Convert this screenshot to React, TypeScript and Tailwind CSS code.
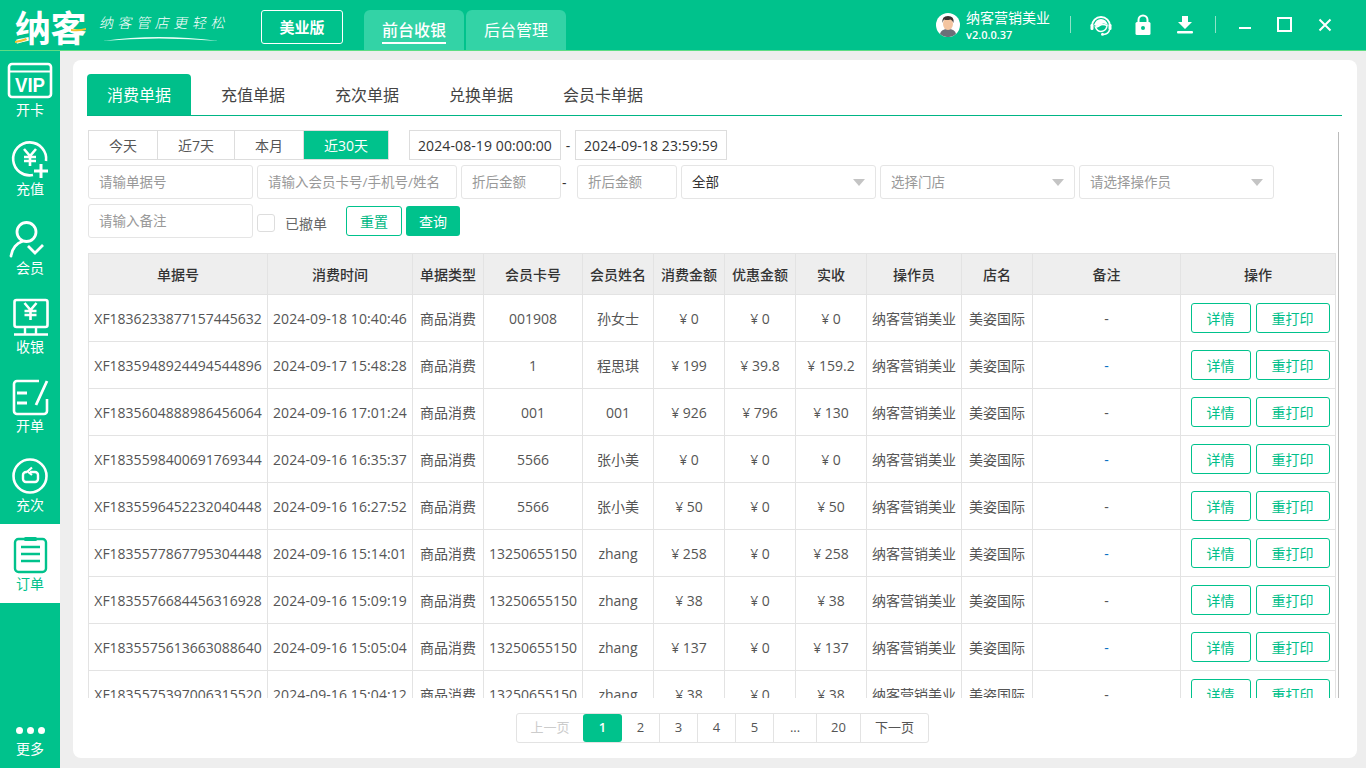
import type { ReactNode } from "react";

const font = "font-['Open_Sans','Noto_Sans_CJK_SC',sans-serif]";

const rows = [
  ["XF1836233877157445632", "2024-09-18 10:40:46", "001908", "孙女士", "¥ 0", "¥ 0", "¥ 0"],
  ["XF1835948924494544896", "2024-09-17 15:48:28", "1", "程思琪", "¥ 199", "¥ 39.8", "¥ 159.2"],
  ["XF1835604888986456064", "2024-09-16 17:01:24", "001", "001", "¥ 926", "¥ 796", "¥ 130"],
  ["XF1835598400691769344", "2024-09-16 16:35:37", "5566", "张小美", "¥ 0", "¥ 0", "¥ 0"],
  ["XF1835596452232040448", "2024-09-16 16:27:52", "5566", "张小美", "¥ 50", "¥ 0", "¥ 50"],
  ["XF1835577867795304448", "2024-09-16 15:14:01", "13250655150", "zhang", "¥ 258", "¥ 0", "¥ 258"],
  ["XF1835576684456316928", "2024-09-16 15:09:19", "13250655150", "zhang", "¥ 38", "¥ 0", "¥ 38"],
  ["XF1835575613663088640", "2024-09-16 15:05:04", "13250655150", "zhang", "¥ 137", "¥ 0", "¥ 137"],
  ["XF1835575397006315520", "2024-09-16 15:04:12", "13250655150", "zhang", "¥ 38", "¥ 0", "¥ 38"],
];

const headers = ["单据号", "消费时间", "单据类型", "会员卡号", "会员姓名", "消费金额", "优惠金额", "实收", "操作员", "店名", "备注", "操作"];

function Yen({ x, y }: { x: number; y: number }) {
  return (
    <path
      d={`M${x - 6} ${y - 8}l6 7 6-7M${x} ${y - 1}v10M${x - 6} ${y}h12M${x - 6} ${y + 4}h12`}
      fill="none"
      stroke="currentColor"
      strokeWidth="2.6"
    />
  );
}

function SideItem({ label, active, first, children }: { label: string; active?: boolean; first?: boolean; children: ReactNode }) {
  return (
    <div className={`flex flex-col items-center ${first ? "h-[78px] pt-[9px]" : "h-[79px] pt-[10px]"} ${active ? "bg-white text-[#00c28c]" : "text-white"}`}>
      <svg width="60" height="40" viewBox="0 0 60 40" className="shrink-0">
        {children}
      </svg>
      <span className="text-[14px] leading-[20px]">{label}</span>
    </div>
  );
}

function Sidebar() {
  return (
    <div className="flex w-[60px] shrink-0 flex-col bg-[#00c28c]">
      <SideItem label="开卡" first>
        <rect x="9" y="4" width="42" height="33" rx="3" fill="none" stroke="currentColor" strokeWidth="2.6" />
        <path d="M9 11.500h42" stroke="currentColor" strokeWidth="2" />
        <text x="30" y="32" textAnchor="middle" fill="currentColor" fontSize="20" fontWeight="700" textLength="30" lengthAdjust="spacingAndGlyphs" fontFamily="Liberation Sans, sans-serif">VIP</text>
      </SideItem>
      <SideItem label="充值">
        <path d="M33 36A16.5 16.5 0 1 1 46 22" fill="none" stroke="currentColor" strokeWidth="2.6" />
        <Yen x={30} y={18} />
        <path d="M41 25v14M34 32h14" stroke="currentColor" strokeWidth="3" />
      </SideItem>
      <SideItem label="会员">
        <circle cx="26.5" cy="14" r="9.5" fill="none" stroke="currentColor" strokeWidth="2.8" />
        <path d="M11 38c1-8 6-13 11-14.500" fill="none" stroke="currentColor" strokeWidth="2.8" strokeLinecap="round" />
        <path d="M28 28l7 7 8-8" fill="none" stroke="currentColor" strokeWidth="2.8" />
      </SideItem>
      <SideItem label="收银">
        <rect x="14.500" y="3" width="33" height="27" rx="2" fill="none" stroke="currentColor" strokeWidth="2.6" />
        <Yen x={30.500} y={14} />
        <path d="M25 30v7M36 30v7M14 37.500h34" stroke="currentColor" strokeWidth="2.4" fill="none" />
      </SideItem>
      <SideItem label="开单">
        <path d="M39 5H17a3 3 0 0 0-3 3v27a3 3 0 0 0 3 3h27a3 3 0 0 0 3-3V23" fill="none" stroke="currentColor" strokeWidth="2.6" />
        <path d="M17 17h10M17 27h10M47 5L36 29" fill="none" stroke="currentColor" strokeWidth="2.8" />
      </SideItem>
      <SideItem label="充次">
        <circle cx="30" cy="21" r="16.500" fill="none" stroke="currentColor" strokeWidth="2.6" />
        <path d="M27 17h-1a3 3 0 0 0-3 3v4a3 3 0 0 0 3 3h9a3 3 0 0 0 3-3v-4a3 3 0 0 0-3-3h-5" fill="none" stroke="currentColor" strokeWidth="2.4" />
        <path d="M32 12.500L27.500 16.500 32 20" fill="none" stroke="currentColor" strokeWidth="2.2" />
      </SideItem>
      <SideItem label="订单" active>
        <rect x="15" y="5" width="31" height="33" rx="3.500" fill="none" stroke="currentColor" strokeWidth="2.4" />
        <rect x="24" y="3" width="13" height="4" rx="1.500" fill="currentColor" />
        <path d="M21 13h19M21 20h19M21 27h19" stroke="currentColor" strokeWidth="2.4" />
      </SideItem>
      <div className="mt-auto flex flex-col items-center pb-[9px] text-white">
        <div className="mb-[5px] flex gap-[4px]">
          <span className="h-[7px] w-[7px] rounded-full bg-white" />
          <span className="h-[7px] w-[7px] rounded-full bg-white" />
          <span className="h-[7px] w-[7px] rounded-full bg-white" />
        </div>
        <span className="text-[14px] leading-[20px]">更多</span>
      </div>
    </div>
  );
}

function Header() {
  return (
    <div className="flex h-[51px] shrink-0 items-stretch border-b border-[#5fdd84] bg-[#00c28c] text-white">
      <div className="relative ml-[15px] mt-[9px] h-[40px] w-[74px] whitespace-nowrap text-[36px] font-bold leading-[40px] tracking-[-0.5px]">
        纳客
        <svg width="74" height="40" viewBox="0 0 74 40" className="absolute left-0 top-0">
          <path d="M0 32q6-1 11-3l1 2q-5 2-12 3zM56 20q8 1 15-1l0 2q-7 2-15 1z" fill="#f2c230" />
        </svg>
      </div>
      <div className="ml-[11px] mt-[13px] flex w-[128px] flex-col">
        <span className="-skew-x-12 whitespace-nowrap text-[14px] font-light leading-[20px] tracking-[4.6px]">纳客管店更轻松</span>
        <svg width="120" height="8" viewBox="0 0 120 8" className="ml-[2px] mt-[1px]">
          <path d="M1 7Q55-1 117 7Q55 2 1 7z" fill="#e8fff6" />
        </svg>
      </div>
      <div className="ml-[33px] mt-[10px] flex h-[34px] w-[82px] items-center justify-center rounded-[3px] border border-white text-[15px] font-bold">美业版</div>
      <div className="ml-[21px] mt-[10px] flex h-[40px] w-[100px] items-start justify-center rounded-t-[6px] bg-[#33d3a6] pt-[9px]">
        <span className="border-b-2 border-white pb-[1px] text-[16px] font-medium leading-[22px]">前台收银</span>
      </div>
      <div className="ml-[2px] mt-[10px] flex h-[40px] w-[100px] items-start justify-center rounded-t-[6px] bg-[#33d3a6] pt-[9px] text-[16px] leading-[22px]">后台管理</div>
      <div className="ml-[370px] mt-[13px] h-[24px] w-[24px] shrink-0">
        <svg width="24" height="24" viewBox="0 0 24 24">
          <circle cx="12" cy="12" r="12" fill="#fff" />
          <path d="M4 21q1-5 8-5t8 5a12 12 0 0 1-16 0z" fill="#6b6f78" />
          <ellipse cx="12" cy="11" rx="5" ry="6" fill="#f3c4a0" />
          <path d="M6.500 10q-1-7 5.500-7t5.500 7q-1-3-3-3.500-4 1-6.500 0-1 1-1.500 3.500z" fill="#3a3230" />
        </svg>
      </div>
      <div className="ml-[6px] mt-[9px] flex flex-col">
        <span className="text-[14px] leading-[18px]">纳客营销美业</span>
        <span className="text-[11px] font-semibold leading-[15px]">v2.0.0.37</span>
      </div>
      <div className="ml-[20px] mt-[16px] h-[17px] w-px bg-[#8fe3c8]" />
      <svg width="22" height="22" viewBox="0 0 22 22" className="ml-[19px] mt-[14px]">
        <path d="M2 12a9 9 0 0 1 18 0" fill="none" stroke="#fff" strokeWidth="2" />
        <rect x="0.500" y="10" width="3" height="6" rx="1.200" fill="#fff" />
        <rect x="18.500" y="10" width="3" height="6" rx="1.200" fill="#fff" />
        <path d="M4 11q2-6 7-6t7 6q-5-3-8 0-3 2-6 0z" fill="#fff" />
        <path d="M5.500 13q2 0 4-1.500 3-2 7.500 0-.5 5.500-6 6-4 0-5.500-4.500z" fill="none" stroke="#fff" strokeWidth="1.600" />
        <path d="M19.500 16q-1 4-6 4.500" fill="none" stroke="#fff" strokeWidth="1.500" />
        <circle cx="12.500" cy="20.300" r="1.500" fill="#fff" />
      </svg>
      <svg width="18" height="22" viewBox="0 0 18 22" className="ml-[22px] mt-[14px]">
        <path d="M4.500 9V6a4.500 4.500 0 0 1 9 0v3" fill="none" stroke="#fff" strokeWidth="2" />
        <rect x="1.500" y="8" width="15" height="13" rx="1.500" fill="#fff" />
        <circle cx="9" cy="14" r="2" fill="#00c28c" />
      </svg>
      <svg width="16" height="18" viewBox="0 0 16 18" className="ml-[25px] mt-[16px]">
        <path d="M5 0h6v6h4l-7 7-7-7h4z" fill="#fff" />
        <rect y="15" width="16" height="2.500" rx="1" fill="#fff" />
      </svg>
      <div className="ml-[22px] mt-[16px] h-[17px] w-px bg-[#8fe3c8]" />
      <div className="ml-[23px] mt-[27px] h-[2px] w-[12px] bg-white" />
      <div className="ml-[26px] mt-[17px] h-[15px] w-[15px] border-2 border-white" />
      <svg width="14" height="14" viewBox="0 0 14 14" className="ml-[26px] mt-[18px]">
        <path d="M1.500 1.500l11 11M12.500 1.500l-11 11" stroke="#fff" strokeWidth="2" />
      </svg>
    </div>
  );
}

function Field({ placeholder, w }: { placeholder: string; w: string }) {
  return (
    <input
      placeholder={placeholder}
      className={`${w} h-[34px] rounded-[3px] border border-[#e5e5e5] px-[10px] text-[13.5px] outline-none placeholder:text-[#999]`}
    />
  );
}

function Select({ label, dark }: { label: string; dark?: boolean }) {
  return (
    <div className={`flex h-[34px] w-[195px] items-center justify-between rounded-[3px] border border-[#e5e5e5] pl-[10px] pr-[10px] text-[13.5px] ${dark ? "text-[#333]" : "text-[#999]"}`}>
      <span>{label}</span>
      <svg width="12" height="7" viewBox="0 0 12 7">
        <path d="M0 0h12L6 7z" fill="#c4c4c4" />
      </svg>
    </div>
  );
}

function Filters() {
  const ranges = [
    ["今天", "w-[69px]"],
    ["近7天", "w-[77px]"],
    ["本月", "w-[69px]"],
  ];
  return (
    <div className="flex flex-col">
      <div className="flex items-center">
        <div className="ml-px flex h-[30px] border border-[#ddd] text-[14px] text-[#555]">
          {ranges.map(([t, w]) => (
            <div key={t} className={`${w} flex items-center justify-center border-r border-[#ddd]`}>{t}</div>
          ))}
          <div className="flex w-[84px] items-center justify-center bg-[#00c28c] text-white">近30天</div>
        </div>
        <div className="ml-[20px] flex h-[30px] w-[152px] items-center justify-center border border-[#ddd] text-[14px] tracking-[0.1px] text-[#333]">2024-08-19 00:00:00</div>
        <span className="w-[14px] text-center text-[14px] text-[#333]">-</span>
        <div className="flex h-[30px] w-[152px] items-center justify-center border border-[#ddd] text-[14px] tracking-[0.1px] text-[#333]">2024-09-18 23:59:59</div>
      </div>
      <div className="ml-px mt-[5px] flex items-center gap-[4px]">
        <Field placeholder="请输单据号" w="w-[165px]" />
        <Field placeholder="请输入会员卡号/手机号/姓名" w="w-[200px]" />
        <Field placeholder="折后金额" w="w-[100px]" />
        <span className="-mx-[4px] w-[16px] pl-[1px] text-left text-[14px] text-[#333]">-</span>
        <Field placeholder="折后金额" w="w-[100px]" />
        <Select label="全部" dark />
        <Select label="选择门店" />
        <Select label="请选择操作员" />
      </div>
      <div className="ml-px mt-[5px] flex items-center">
        <Field placeholder="请输入备注" w="w-[165px]" />
        <span className="ml-[4px] mt-[4px] h-[18px] w-[18px] rounded-[3px] border border-[#ddd]" />
        <span className="ml-[10px] mt-[4px] text-[14px] text-[#666]">已撤单</span>
        <button className="ml-[19px] h-[30px] w-[56px] rounded-[3px] border border-[#00c28c] text-[14px] text-[#00b884]">重置</button>
        <button className="ml-[4px] h-[30px] w-[54px] rounded-[3px] bg-[#00c28c] text-[14px] text-white">查询</button>
      </div>
    </div>
  );
}

function OrderTable() {
  const cols = ["w-[179px]", "w-[145px]", "w-[71px]", "w-[99px]", "w-[71px]", "w-[71px]", "w-[71px]", "w-[71px]", "w-[95px]", "w-[71px]", "w-[148px]", "w-[155px]"];
  const td = "border border-[#e3e3e3] p-0 text-center whitespace-nowrap";
  return (
    <div className="ml-px mt-[15px] h-[445px] overflow-hidden">
      <table className="w-[1247px] table-fixed border-collapse text-[14px] text-[#555]">
        <colgroup>
          {cols.map((c, i) => (
            <col key={i} className={c} />
          ))}
        </colgroup>
        <thead>
          <tr className="h-[41px] bg-[#eee]">
            {headers.map((h) => (
              <th key={h} className={`${td} text-[14px] font-medium text-[#333]`}>{h}</th>
            ))}
          </tr>
        </thead>
        <tbody>
          {rows.map((r, i) => (
            <tr key={r[0]} className="h-[47px]">
              <td className={td}>{r[0]}</td>
              <td className={`${td} tracking-[0.1px]`}>{r[1]}</td>
              <td className={td}>商品消费</td>
              <td className={td}>{r[2]}</td>
              <td className={td}>{r[3]}</td>
              <td className={td}>{r[4]}</td>
              <td className={td}>{r[5]}</td>
              <td className={td}>{r[6]}</td>
              <td className={td}>纳客营销美业</td>
              <td className={td}>美姿国际</td>
              <td className={`${td} ${i % 2 ? "text-[#0a6fc2]" : "text-[#555]"}`}>-</td>
              <td className={td}>
                <div className="flex justify-center gap-[5px] pl-[4px] text-[#00bf8a]">
                  <button className="h-[30px] w-[60px] rounded-[3px] border border-[#00c28c]">详情</button>
                  <button className="h-[30px] w-[74px] rounded-[3px] border border-[#00c28c]">重打印</button>
                </div>
              </td>
            </tr>
          ))}
        </tbody>
      </table>
    </div>
  );
}

function Pagination() {
  const pages: [string, string][] = [
    ["2", "w-[38px]"],
    ["3", "w-[38px]"],
    ["4", "w-[38px]"],
    ["5", "w-[38px]"],
    ["...", "w-[43px]"],
    ["20", "w-[44px]"],
  ];
  return (
    <div className="mt-[15px] flex justify-center pl-[1px]">
      <div className="flex h-[30px] rounded-[3px] border border-[#e3e3e3] text-[13px] text-[#555]">
        <div className="flex w-[66px] items-center justify-center text-[#ccc]">上一页</div>
        <div className="flex w-[39px] items-center justify-center rounded-[3px] bg-[#00c28c] font-semibold text-white">1</div>
        {pages.map(([t, w]) => (
          <div key={t} className={`${w} flex items-center justify-center border-r border-[#e3e3e3]`}>{t}</div>
        ))}
        <div className="flex w-[67px] items-center justify-center">下一页</div>
      </div>
    </div>
  );
}

export default function App() {
  const tabs = ["充值单据", "充次单据", "兑换单据", "会员卡单据"];
  return (
    <div className={`flex h-[768px] w-[1366px] flex-col overflow-hidden bg-[#eee] ${font}`}>
      <Header />
      <div className="flex min-h-0 flex-1">
        <Sidebar />
        <div className="ml-[13px] mt-[9px] h-[698px] w-[1284px] rounded-[8px] bg-white pl-[14px] pt-[14px]">
          <div className="flex h-[42px] w-[1255px] border-b border-[#00b585] text-[16px] text-[#444]">
            <div className="mr-[5px] flex h-[41px] w-[104px] items-center justify-center rounded-t-[4px] bg-[#00bf8a] text-white">消费单据</div>
            {tabs.map((t) => (
              <div key={t} className="flex h-[41px] items-center justify-center px-[25px]">{t}</div>
            ))}
          </div>
          <div className="relative mt-[14px] h-[568px] w-[1252px]">
            <span className="absolute bottom-0 right-0 top-[2px] w-px bg-[#bbb]" />
            <Filters />
            <OrderTable />
          </div>
          <Pagination />
        </div>
      </div>
    </div>
  );
}
